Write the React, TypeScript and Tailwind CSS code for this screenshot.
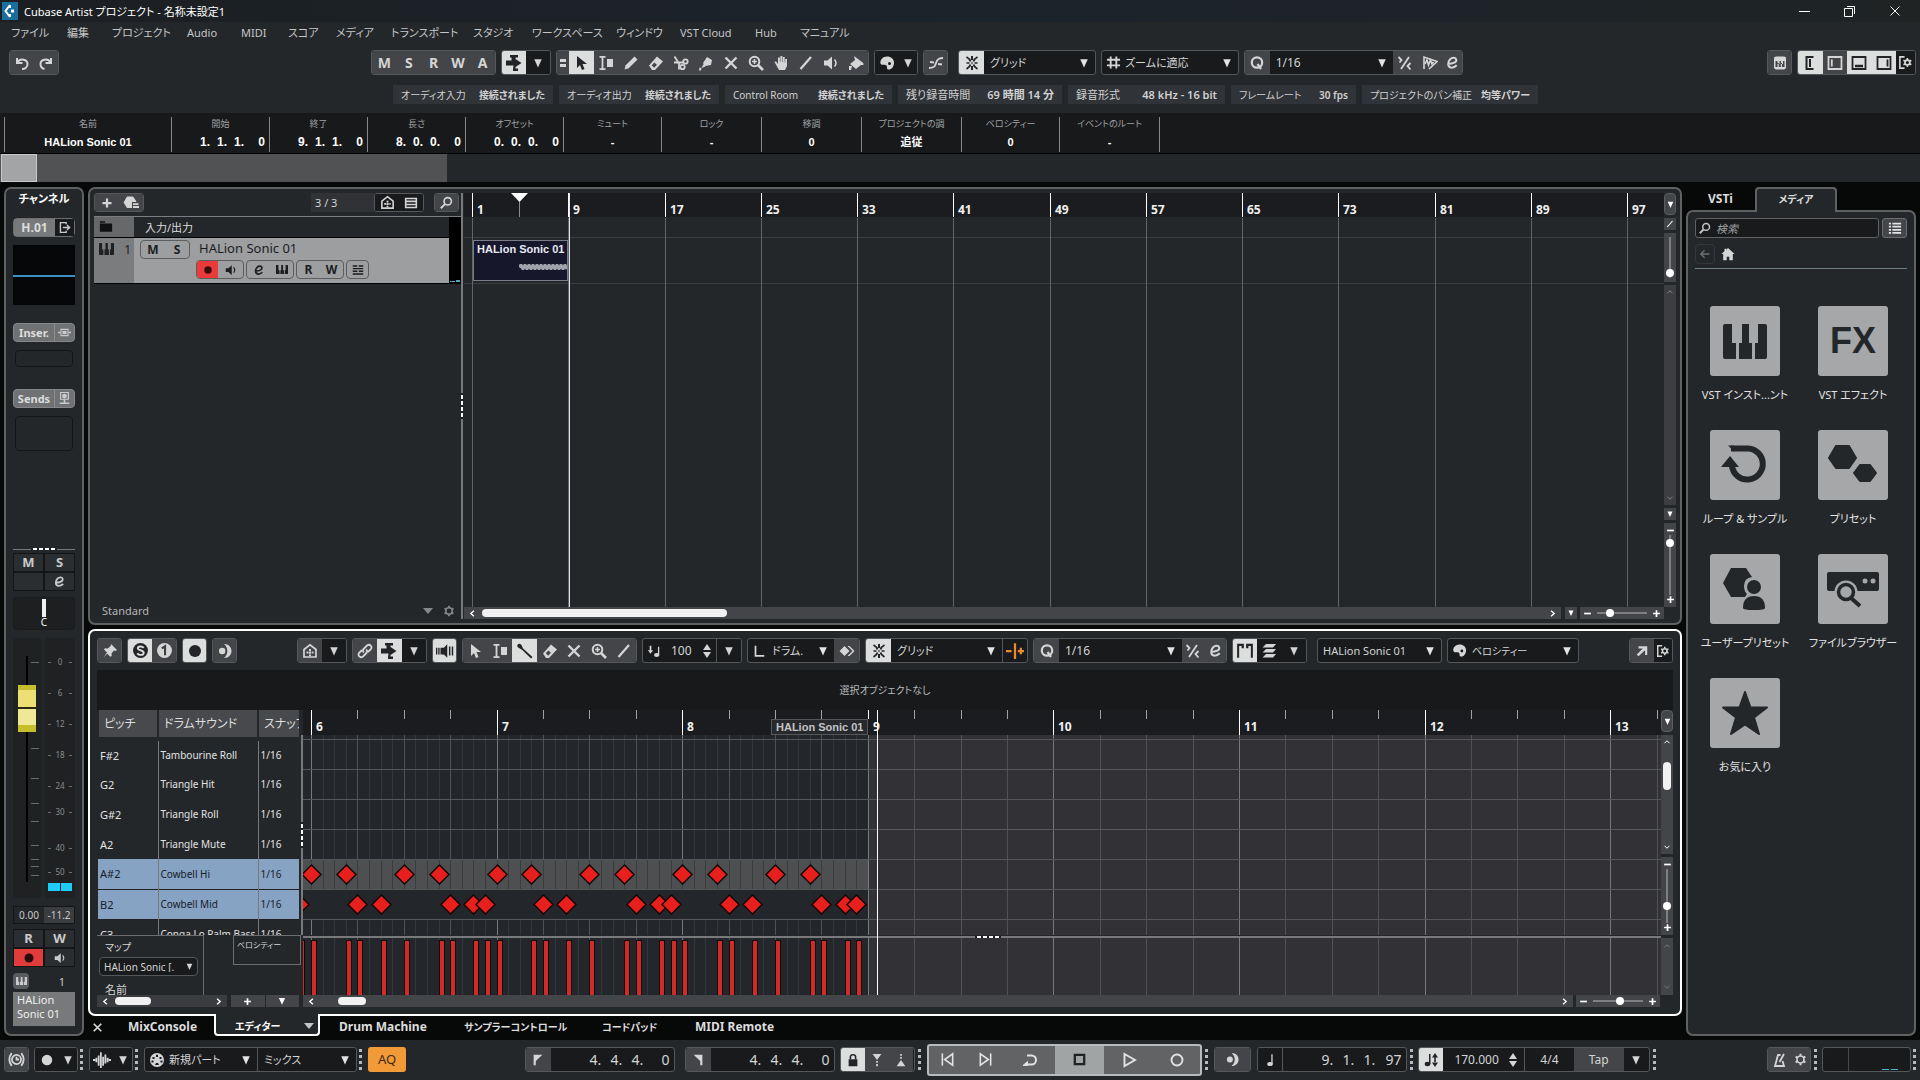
import React from "react";

type Kids = { children?: React.ReactNode };

const line = { fill: "none", stroke: "currentColor", strokeWidth: 2 } as const;

const ICONS: Record<string, React.ReactNode> = {
  undo: <g {...line}><path d="M3 3v5h5.500" /><path d="M3.500 7.500C6 3 13.500 4 13.500 9c0 3-2.500 5-5.500 5" /></g>,
  redo: <g {...line}><path d="M13 3v5H7.500" /><path d="M12.500 7.500C10 3 2.500 4 2.500 9c0 3 2 4.500 4 5" /></g>,
  autoscroll: <path d="M0 5.500h5.500V2.500H4V0h8v2.500h-2.500V4L15.500 8l-6 4v1.500H12V16H7v-2l.500-3.500H0z" />,
  arrow: <path d="M4 1v12l3-3 2 5 2.500-1-2-5H14z" />,
  range: <path d="M1.500 1h6v1.700H5.400v10.600h2.100V15h-6v-1.700h2.100V2.700H1.500zM9 4h6v8H9z" />,
  pencil: <path d="M1.500 14.500l1.200-4.200L11.500 1.500l3 3-8.800 8.800z" />,
  eraser: <path fillRule="evenodd" d="M1 10.500l8-9 6 5-8 8.500H4zM3.700 10.300l2.500 2.400 2.700-3-2.500-2.300z" />,
  cut: <g fill="none" stroke="currentColor" strokeWidth="1.800"><path d="M1.500 1.500l4.500 7v6M1 7.500h9" /><circle cx="12.500" cy="6.500" r="2.200" /><circle cx="9.500" cy="12" r="2.200" /></g>,
  glue: <path d="M9 2l5 3-1 5-6 1-2-3zM5.500 9l2 2.500-4 1.500zM1.500 12.500l2 .5-.5 2.500H1z" />,
  x: <path {...line} strokeWidth="2.400" d="M2.500 2.500l11 11M13.500 2.500l-11 11" />,
  zoom: <g {...line}><circle cx="6.500" cy="6.500" r="4.800" /><path d="M4 6.500h5M6.500 4v5" strokeWidth="1.600" /><path d="M10 10l5 5" strokeWidth="2.600" /></g>,
  hand: <path d="M1.500 7l1.500-.7L5 9V2.500h1.900V7h.5V1h1.900v6h.5V2h1.900v5.500h.5V4H14v7l-2 4H6z" />,
  slash: <path {...line} strokeWidth="2.200" d="M2.500 14L13 2" />,
  speaker: <g><path d="M1 5.500h3.500L9 1.500v13L4.500 10.500H1z" /><path d="M11.500 4.500q3 3.500 0 7" fill="none" stroke="currentColor" strokeWidth="1.500" /></g>,
  bucket: <path d="M6 1l8 6q2 1 1.500 3H13l-5 4-6-5 5-4zM1 11h3l-1 4H1z" />,
  palette: <path fillRule="evenodd" d="M8 1.500c4 0 7 2.500 7 6.200C15 12 12 15 9 14.500c-1.500-.3-.5-3-1.500-4S2.500 11 1.500 8.500C.5 5 4 1.500 8 1.500zM10.500 7a1.500 1.500 0 100 3 1.500 1.500 0 000-3z" />,
  curve: <g fill="none" stroke="currentColor" strokeWidth="1.800"><path d="M1 13c7 0 6-3 7-5s1-5 7-5" /><path d="M2 7l4 .5M10 9l4 .5" /></g>,
  snap: <g><path {...line} strokeWidth="1.800" d="M2.500 2Q6 4 6.500 6.500M13.500 2Q10 4 9.500 6.500M2.500 14Q6 12 6.500 9.500M13.500 14Q10 12 9.500 9.500" /><path d="M7 1h2v4H7zM7 11h2v4H7zM2.500 7.200h3v1.600h-3zM10.500 7.200h3v1.600h-3zM7.300 7.300h1.400v1.400H7.300z" /></g>,
  hash: <path {...line} d="M5 1.500v13M11 1.500v13M1 5h14M1 11h14" />,
  q: <g {...line} strokeWidth="2.200"><circle cx="8" cy="7.500" r="5.200" /><path d="M8.500 9l3.500 5" /></g>,
  e: <path {...line} strokeWidth="2.200" d="M3 9.500C9 9.500 12.500 7.500 12 5c-.5-2.500-4-3-6.500-.5C2.500 7.500 2.500 13 7 13.500c2.500 0 4-1 5.500-2.500" />,
  iq: <g fill="none" stroke="currentColor" strokeWidth="1.800"><path d="M4 14L12 2M1.500 2l3 3-2 2.500M13.500 8l-3 3 3 3.500" /></g>,
  aq: <g fill="none" stroke="currentColor" strokeWidth="1.600"><path d="M2 14V2l13 4.500L7 14" /><path d="M3 9l2-4 1.500 5 2-5 1.500 4 1.500-2" /></g>,
  keyboard: <path fillRule="evenodd" d="M2 3q0-1.500 2-1.500h8q2 0 2 1.500v9q0 2.500-2.500 2.500h-7Q2 14.500 2 12zM3.500 6v6h2V8h1.300v4h2V8H10v4h2.500V6H11v3H9V6H7.500v3h-2V6z" />,
  zleft: <path {...line} d="M11.500 2H4.500v12h7M8 4v8" />,
  zpart: <g {...line} strokeWidth="1.800"><path d="M1.500 2h13v12h-13z" /><path d="M4.800 4.500v7" /></g>,
  zlow: <g {...line} strokeWidth="1.800"><path d="M1.500 2h13v12h-13z" /><path d="M4 11h8" strokeWidth="2.600" /></g>,
  zright: <g {...line} strokeWidth="1.800"><path d="M1.500 2h13v12h-13z" /><path d="M11.500 4.500v7" /></g>,
  setup: <g fill="none" stroke="currentColor"><path strokeWidth="1.700" d="M7 2H2v12h5" /><circle cx="10" cy="8" r="2.600" strokeWidth="1.800" /><path strokeWidth="1.800" d="M10 3.200v2M10 10.800v2M5.800 5.600l1.800 1M12.400 9.400l1.800 1M5.800 10.400l1.800-1M12.400 6.600l1.800-1" /></g>,
  gear: <g fill="none" stroke="currentColor"><circle cx="8" cy="8" r="4.300" strokeWidth="2" /><path strokeWidth="2.400" d="M8 1v2.500M8 12.500V15M2 4.500l2.200 1.300M11.800 10.200L14 11.500M2 11.500l2.200-1.300M11.800 5.800L14 4.500" /></g>,
  plus: <path {...line} strokeWidth="3" d="M8 2v12M2 8h12" />,
  minus: <path {...line} strokeWidth="3" d="M2 8h12" />,
  preset: <path d="M4 1.500h6l3.500 5-.5.5H9v6H4L.500 7.500zM10 8.200h5.500v1.800H10zM10 11h6v2h-6z" />,
  house: <g fill="none" stroke="currentColor" strokeWidth="1.700"><path d="M2 6.500L8 1.800l6 4.700V14H2z" /><path d="M4.500 9.500h7M8 6v7" strokeWidth="2" strokeDasharray="2 .8" /></g>,
  list: <path fillRule="evenodd" d="M1 2h14v12H1zM2.800 3.600v1.600h10.400V3.600zM2.800 7v1.800h10.400V7zM2.800 10.600v1.800h10.400v-1.800z" />,
  search: <g {...line}><circle cx="9.500" cy="6.500" r="4.500" /><path d="M6 10l-5 5" strokeWidth="2.400" /></g>,
  folder: <path d="M1 1.500h6V3H1zM1 4h14v9.500H1z" />,
  lanes: <path d="M1 1.500h6v2.200H1zM9 1.500h6v2.200H9zM1 5.300h14v1.700H1zM1 8.600h6v2.200H1zM9 8.600h6v2.200H9zM1 12.400h14v2H1z" />,
  exit: <g fill="none" stroke="currentColor" strokeWidth="1.700"><path d="M10 4V2H3v12h7v-2M6 8h8M11 5l3.300 3L11 11" /></g>,
  insert: <g><path d="M0 7h3v2H0zM13 7h3v2h-3z" /><path fillRule="evenodd" d="M3 3.500h10v9H3zM4.300 4.800v6.400h7.400V4.800z" /><path d="M5.500 6h5v4h-5z" /></g>,
  send: <g><path fillRule="evenodd" d="M2.500 0h11v9.500h-11zM4 1.200v7h8v-7z" /><circle cx="8" cy="5" r="3" /><path d="M7 9h2v4H7zM2 13h12v1.800H2z" /></g>,
  pin: <path d="M9 1l6 6-1.500 1-1.500-.5-2.500 3 .2 2.500-1.500.7-3-3L1.500 14.500 5 9.500l-3-3 1-1.300 2.800.2 3-2.700z" />,
  solo: <g><circle cx="8" cy="8" r="7" /><path d="M11 5.500C9.500 3.500 5.500 4 5.500 6s5.500 1.500 5.500 4-4.500 3-6 .5" fill="none" stroke="#dcdddd" strokeWidth="1.800" /></g>,
  one: <g><circle cx="8" cy="8" r="7" /><path d="M5.500 6l3-2v8.500" fill="none" stroke="#3c3e41" strokeWidth="2" /></g>,
  dot: <circle cx="8" cy="8" r="6" />,
  moon: <g><path d="M7 1C17 1 17 15 7 15C11.500 11 11.500 5 7 1z" /><circle cx="5.200" cy="8" r="3.200" /></g>,
  link: <g {...line} strokeWidth="1.800"><path d="M7 9.500C5 8 6 6.500 7 5.500l3-3c3-2 5.500 1 4 3.500L11 9" /><path d="M9 6.500c2 1.500 1 3 0 4l-3 3c-3 2-5.500-1-4-3.500L5 7" /></g>,
  feedback: <path d="M0 5h1.200v6H0zM2 5h1.200v6H2zM4 5h3l3-3v12l-3-3H4zM11.500 4h1.300v8h-1.300zM14 4h1.300v8H14z" />,
  stick: <path d="M.5 2Q2-.5 4.500 2L6 5.500l9.500 8.500-1.500 1.500L5 6.800 2 5Q-.5 4 .5 2z" />,
  vel: <g><path d="M3 2h2v5h2L4 11 1 7h2zM12.500 3h1.500v10h-1.500z" /><ellipse cx="11" cy="12.500" rx="3" ry="2.300" /></g>,
  lshape: <path {...line} d="M4 2v11.500h10" />,
  diamonds: <path d="M5.500 3l5 5-5 5-5-5zM8.500 3h2l5 5-5 5h-2l5-5z" />,
  plusminus: <path {...line} d="M0 8h5M8 1v14M10.500 8H16M13.200 5.200v5.600" />,
  parts: <path d="M1 1.500h6v4H5v-2H2.800V14H1zM9 1.500h6V14h-1.800V3.500H11v2H9z" />,
  layers: <path d="M5 1h10l-3 3.500H1.500zM5 6h10l-3 3.500H1.500zM5 11h10l-3 3.500H1.500z" />,
  open: <path d="M4 2.500h10v10h-2.500V7L4 14 2 12l7-7H4z" />,
  blist: <path d="M1 2h2.500v2H1zM5 2h10v2H5zM1 5.500h2.500v2H1zM5 5.500h10v2H5zM1 9h2.500v2H1zM5 9h10v2H5zM1 12.500h2.500v2H1zM5 12.500h10v2H5z" />,
  back: <path {...line} d="M14 8H3M7.500 3L2.500 8l5 5" />,
  home: <path d="M8 1l7.500 7h-2v7H9.500v-4h-3v4H2.500V8h-2L4 4.500V2h2v1z" />,
  clock: <g fill="none" stroke="currentColor" strokeWidth="1.700"><circle cx="8" cy="8" r="4.300" /><path d="M8 5.500V8h2.500M3.500 2Q-1 8 3.500 14M12.500 2Q17 8 12.500 14" /></g>,
  wave: <path {...line} strokeWidth="1.600" d="M0 8h2M3 6v4M5 4v9M7 1v14M9 5v8M11 3v8M13 6v4M14 8h2" />,
  midi: <path fillRule="evenodd" d="M8 1a7 7 0 100 14A7 7 0 008 1zM7 2.800h2V5H7zM3.500 5h2v2h-2zM10.500 5h2v2h-2zM2.500 8.500h2v2h-2zM11.500 8.500h2v2h-2zM6 13l1-2h2l1 2z" />,
  locl: <path d="M3 2h10L5.500 9v5H3z" />,
  locr: <path d="M3 2h10v12h-2.500V9z" />,
  lock: <g><path d="M3 7h10v8H3z" /><path d="M5 7V4.500Q5 2 8 2t3 2.500V7" fill="none" stroke="currentColor" strokeWidth="1.800" /></g>,
  punchin: <path d="M3 1h10L8 8zM7 9h2v2H7zM7 12.500h2v2.500H7z" />,
  punchout: <path d="M3 15h10L8 8zM7 1h2v2H7zM7 4.500h2v2H7z" />,
  prev: <g {...line} strokeWidth="1.700"><path d="M2.500 1.500v13" /><path d="M13.500 2v12L5 8z" /></g>,
  next: <g {...line} strokeWidth="1.700"><path d="M13.500 1.500v13" /><path d="M2.500 2v12L11 8z" /></g>,
  cycle: <g {...line}><path d="M5 3.500h4.500a4.500 4.500 0 010 9H3" /><path d="M1 13.500l4.500-4v4z" fill="currentColor" strokeWidth="1" /></g>,
  stop: <path {...line} strokeWidth="2.400" d="M3 3h10v10H3z" />,
  play: <path {...line} strokeWidth="1.900" d="M3.500 2l10.500 6-10.500 6z" />,
  rec: <circle {...line} strokeWidth="1.900" cx="8" cy="8" r="5.500" />,
  note: <g><path d="M9.500 1.500H11v11H9.500z" /><ellipse cx="8" cy="12.500" rx="3.200" ry="2.300" /></g>,
  tempo: <g><path d="M6 2h1.500v10H6zM11.200 5h1.600v6h-1.600zM12 1l3 4.500H9zM12 15l3-4.500H9z" /><ellipse cx="4.500" cy="12" rx="2.800" ry="2.200" /></g>,
  metro: <g {...line} strokeWidth="1.800"><path d="M10.500 9l1.500 5H3L6 3h2.500M7.500 10L12 2" /></g>,
  close: <path {...line} strokeWidth="1.300" d="M2 2l12 12M14 2L2 14" />,
  left: <path {...line} strokeWidth="2.400" d="M10.500 3L5 8l5.500 5" />,
  right: <path {...line} strokeWidth="2.400" d="M5.500 3L11 8l-5.500 5" />,
  up: <path {...line} d="M3 10.500L8 5.500l5 5" />,
  down: <path {...line} d="M3 5.500l5 5 5-5" />,
  tri: <path d="M3 3h10L8 14z" />,
};

function Icon({ n, c = "size-4" }: { n: string; c?: string }) {
  return <svg viewBox="0 0 16 16" fill="currentColor" aria-hidden="true" className={"shrink-0 " + c}>{ICONS[n]}</svg>;
}

function Piano({ c }: { c: string }) {
  return (
    <svg viewBox="0 0 44 35" fill="currentColor" aria-hidden="true" className={"shrink-0 " + c}>
      <path d="M2 0h7v19h4v16H2q-2 0-2-2V2q0-2 2-2zM19 0h7v19h3v16H16V19h3zM35 0h7q2 0 2 2v31q0 2-2 2H32V19h3z" />
    </svg>
  );
}

const TONE = {
  gray: "bg-[#434548] text-[#d4d5d5]",
  on: "bg-[#dcdddd] text-[#222427]",
  dark: "bg-[#191a1c] text-[#d4d5d5]",
  clear: "",
};

function Cell({ label, icon, tone = "gray", w = "w-[25px]", ic, children }: { label: string; icon?: string; tone?: keyof typeof TONE; w?: string; ic?: string } & Kids) {
  return (
    <button type="button" aria-label={label} className={"flex min-w-0 items-center justify-center leading-none " + w + " " + TONE[tone]}>
      {icon ? <Icon n={icon} c={ic} /> : children}
    </button>
  );
}

function Group({ w = "", h = "h-[25px]", children }: { w?: string; h?: string } & Kids) {
  return <div className={"flex shrink-0 overflow-hidden rounded-[3px] border border-[#55585a] bg-[#191a1c] " + h + " " + w}>{children}</div>;
}

function Drop({ label, value, w = "flex-1", pad = "pl-2", size = "text-[12px]" }: { label: string; value: string; w?: string; pad?: string; size?: string }) {
  return (
    <div className={"relative flex min-w-0 items-center " + w}>
      <select aria-label={label} className={"h-full w-full appearance-none bg-transparent pr-4 leading-none text-[#d4d5d5] outline-none " + pad + " " + size}>
        <option>{value}</option>
      </select>
      <Icon n="tri" c="pointer-events-none absolute right-[5px] size-3 text-[#e2e3e3]" />
    </div>
  );
}

function Dots() {
  return (
    <div aria-hidden="true" className="flex w-[3px] shrink-0 flex-col gap-[3px]">
      <i className="h-[3px] bg-[#b9babb]" /><i className="h-[3px] bg-[#b9babb]" /><i className="h-[3px] bg-[#b9babb]" /><i className="h-[3px] bg-[#b9babb]" />
    </div>
  );
}

function Grip({ vertical }: { vertical?: boolean }) {
  return (
    <div aria-hidden="true" className={"flex shrink-0 gap-[2px] bg-[#1d1f22] " + (vertical ? "w-[2px] flex-col py-[2px]" : "h-[2px] px-[2px]")}>
      {[0, 1, 2, 3].map((i) => <i key={i} className={"bg-white " + (vertical ? "h-1 w-full" : "h-full w-1")} />)}
    </div>
  );
}

const MENU: [string, string][] = [
  ["ファイル", "w-[56px]"], ["編集", "w-[45px]"], ["プロジェクト", "w-[75px]"], ["Audio", "w-[54px]"], ["MIDI", "w-[47px]"],
  ["スコア", "w-[48px]"], ["メディア", "w-[55px]"], ["トランスポート", "w-[82px]"], ["スタジオ", "w-[59px]"], ["ワークスペース", "w-[84px]"],
  ["ウィンドウ", "w-[64px]"], ["VST Cloud", "w-[75px]"], ["Hub", "w-[45px]"], ["マニュアル", "w-[60px]"],
];

function TitleBar() {
  return (
    <header>
      <div className="flex h-[22px] items-center bg-gradient-to-r from-[#1c1f22] via-[#1b232b] to-[#1f2324] pl-[2px]">
        <svg viewBox="0 0 16 18" aria-hidden="true" className="h-[18px] w-4"><path fill="#1a6e9d" d="M0 0h16v18H0z" /><path d="M8 3L3.500 9 8 15M8 3v3M8 12v3" fill="none" stroke="#fff" strokeWidth="2" /><path d="M9 7.500h3v3H9z" fill="#fff" /></svg>
        <h1 className="ml-[6px] flex-1 whitespace-nowrap pt-px text-[11px] leading-none text-white">Cubase Artist プロジェクト - 名称未設定1</h1>
        <div className="flex items-center gap-[34px] pr-[19px] text-white">
          <button type="button" aria-label="最小化"><svg viewBox="0 0 11 11" className="size-[11px]"><path d="M0 5.500h11" stroke="currentColor" /></svg></button>
          <button type="button" aria-label="元に戻す"><svg viewBox="0 0 11 11" className="size-[11px]" fill="none" stroke="currentColor"><path d="M.5 2.500h8v8h-8zM3 .5h7.500V8" /></svg></button>
          <button type="button" aria-label="閉じる"><Icon n="close" c="size-3" /></button>
        </div>
      </div>
      <nav className="flex h-[23px] items-center pb-[2px] pl-[11px] text-[11px] leading-none text-[#c3c5c6]">
        {MENU.map(([t, w]) => <button type="button" key={t} className={"whitespace-nowrap text-left " + w}>{t}</button>)}
      </nav>
    </header>
  );
}

const TOOLS: [string, string][] = [["選択", "arrow"], ["範囲選択", "range"], ["鉛筆", "pencil"], ["消しゴム", "eraser"], ["はさみ", "cut"], ["のり", "glue"], ["ミュート", "x"], ["ズーム", "zoom"], ["手", "hand"], ["ライン", "slash"], ["再生", "speaker"], ["カラー", "bucket"]];

function Toolbar() {
  return (
    <div className="mt-[5px] flex gap-[5px] pl-[9px] pr-1">
      <Group w="w-[50px]"><Cell label="元に戻す操作" icon="undo" /><Cell label="やり直し" icon="redo" /></Group>
      <div className="flex-1" />
      <div className="ml-[3px]" />
      <Group w="w-[125px]">
        {["M", "S", "R", "W", "A"].map((t) => <Cell key={t} label={t}><b className="text-[14px]">{t}</b></Cell>)}
      </Group>
      <Group w="w-[50px]"><Cell label="オートスクロール" icon="autoscroll" tone="on" /><Cell label="スクロール設定" icon="tri" tone="dark" ic="size-3" /></Group>
      <Group w="w-[313px]">
        <div className="flex w-[12px] shrink-0 flex-col items-center justify-center gap-[2px] bg-[#434548]"><i className="h-[3px] w-[6px] bg-[#d4d5d5]" /><i className="h-[3px] w-[6px] bg-[#d4d5d5]" /></div>
        {TOOLS.map(([l, i]) => <Cell key={l} label={l} icon={i} tone={i === "arrow" ? "on" : "gray"} />)}
      </Group>
      <Group w="w-[44px]"><Cell label="カラーツール" icon="palette" tone="dark" /><Cell label="カラーメニュー" icon="tri" tone="dark" ic="size-3" w="w-[18px]" /></Group>
      <Group w="w-[25px]"><Cell label="オートメーション" icon="curve" /></Group>
      <div className="ml-[5px]">
        <Group w="w-[138px]"><Cell label="スナップ" icon="snap" tone="on" w="w-[25px] shrink-0" /><Drop label="スナップタイプ" value="グリッド" pad="pl-[6px]" size="text-[11px]" /></Group>
      </div>
      <Group w="w-[138px]"><span className="flex items-center pl-1 text-[#d4d5d5]"><Icon n="hash" c="size-[15px]" /></span><Drop label="グリッドタイプ" value="ズームに適応" pad="pl-1" size="text-[11px]" /></Group>
      <Group w="w-[219px]">
        <Cell label="クオンタイズ適用" icon="q" /><Drop label="クオンタイズ" value="1/16" w="w-[125px]" pad="pl-[6px]" />
        <Cell label="iQ" icon="iq" /><Cell label="オーディオクオンタイズ" icon="aq" /><Cell label="クオンタイズ設定" icon="e" w="w-[20px]" ic="size-[15px]" />
      </Group>
      <div className="flex-1" />
      <Group w="w-[25px]"><Cell label="キーボード" icon="keyboard" /></Group>
      <Group w="w-[119px]">
        <Cell label="左ゾーン" icon="zleft" tone="on" /><Cell label="インスペクター" icon="zpart" /><Cell label="下ゾーン" icon="zlow" tone="on" /><Cell label="右ゾーン" icon="zright" tone="on" /><Cell label="レイアウト設定" icon="setup" tone="dark" w="w-[19px]" ic="size-[15px]" />
      </Group>
    </div>
  );
}

const STATUS: [string, string, string][] = [
  ["オーディオ入力", "接続されました", "w-[160px] text-[10px]"], ["オーディオ出力", "接続されました", "w-[160px] text-[10px]"], ["Control Room", "接続されました", "w-[167px] text-[10px]"],
  ["残り録音時間", "69 時間 14 分", "w-[164px] text-[11px]"], ["録音形式", "48 kHz - 16 bit", "w-[157px] text-[11px]"], ["フレームレート", "30 fps", "w-[125px] text-[10px]"], ["プロジェクトのパン補正", "均等パワー", "w-[176px] text-[10px]"],
];

function StatusLine() {
  return (
    <dl className="mt-[10px] flex justify-center gap-[6px] pl-[11px] leading-none">
      {STATUS.map(([k, v, w]) => (
        <div key={k} className={"flex h-[19px] items-center justify-between whitespace-nowrap bg-[#303337] px-[8px] text-[#d0d1d2] " + w}><dt>{k}</dt><dd className="font-semibold">{v}</dd></div>
      ))}
    </dl>
  );
}

function Pos({ v, cell, last }: { v: string[]; cell: string; last: string }) {
  return <span className="inline-flex">{v.map((t, i) => <span key={i} className={i === 3 ? "text-right " + last : "text-left " + cell}>{t}{i < 3 ? "." : ""}</span>)}</span>;
}

const INFO: [string, string | string[], string][] = [
  ["名前", "HALion Sonic 01", "w-[167px]"], ["開始", ["1", "1", "1", "0"], "w-[98px]"], ["終了", ["9", "1", "1", "0"], "w-[98px]"], ["長さ", ["8", "0", "0", "0"], "w-[98px]"],
  ["オフセット", ["0", "0", "0", "0"], "w-[98px]"], ["ミュート", "-", "w-[98px]"], ["ロック", "-", "w-[100px]"], ["移調", "0", "w-[100px]"], ["プロジェクトの調", "追従", "w-[100px]"], ["ベロシティー", "0", "w-[98px]"], ["イベントのルート", "-", "w-[100px]"],
];

function InfoLine() {
  return (
    <dl className="mt-[9px] flex h-[41px] border-b border-black bg-[#18191b] pb-px pl-1 pt-1">
      {INFO.map(([k, v, w]) => (
        <div key={k} className={"flex flex-col border-l border-[#85878a] " + w}>
          <dt className="mt-px text-center text-[9px] leading-[12px] text-[#a0a2a4]">{k}</dt>
          <dd className={"mt-[5px] whitespace-nowrap font-['Liberation_Sans','Noto_Sans_CJK_JP',sans-serif] font-bold leading-[14px] text-white " + (Array.isArray(v) ? "pr-1 text-right text-[12px]" : "text-center text-[11px]")}>
            {Array.isArray(v) ? <Pos v={v} cell="w-[17px]" last="w-[14px]" /> : v}
          </dd>
        </div>
      ))}
      <div className="border-l border-[#85878a]" />
    </dl>
  );
}

const MS_CELL = "flex items-center justify-center border border-[#141517] leading-none";

function ChannelStrip() {
  const ticks = [20, 106, 136, 161, 179, 203, 217, 224, 233];
  const scale: [string, number][] = [["0", 24], ["6", 55], ["12", 86], ["18", 117], ["24", 148], ["30", 174], ["40", 210], ["50", 234]];
  return (
    <aside className="ml-1 flex w-[80px] shrink-0 flex-col rounded-[7px] border-2 border-[#5f6163] bg-[#24272a] px-[7px] text-[#c9cacb]">
      <h2 className="mt-[3px] text-center text-[11px] font-bold leading-[14px] text-white">チャンネル</h2>
      <div className="mt-[12px] flex h-[19px] rounded-sm border border-[#6c6e70]">
        <button type="button" className="w-[41px] bg-[#77797b] text-[12px] font-bold leading-none text-[#dcdddd]">H.01</button>
        <button type="button" aria-label="ルーティング" className="flex flex-1 items-center justify-center bg-[#191a1c]"><Icon n="exit" c="size-[13px]" /></button>
      </div>
      <div className="mt-2 flex h-[60px] items-center bg-[#060708]"><div className="mt-px h-[2px] w-full bg-[#3b8fc4]" /></div>
      <div className="mt-[18px] flex h-[19px] rounded-sm border border-[#85878a] bg-[#6f7173]">
        <button type="button" className="w-[41px] border-r border-[#8b8d8f] text-[11px] font-bold leading-none text-[#dcdddd]">Inser.</button>
        <button type="button" aria-label="インサートバイパス" className="flex flex-1 items-center justify-center"><Icon n="insert" c="size-[13px]" /></button>
      </div>
      <div className="mx-[2px] mt-[8px] h-[17px] rounded-sm border border-[#141517]" />
      <div className="mt-[22px] flex h-[19px] rounded-sm border border-[#85878a] bg-[#6f7173]">
        <button type="button" className="w-[41px] border-r border-[#8b8d8f] text-[11px] font-bold leading-none text-[#dcdddd]">Sends</button>
        <button type="button" aria-label="センドバイパス" className="flex flex-1 items-center justify-center"><Icon n="send" c="size-[13px]" /></button>
      </div>
      <div className="mx-[2px] mt-[8px] h-[35px] rounded-sm border border-[#141517]" />
      <div className="min-h-[40px] flex-1" />
      <div className="flex items-center"><div className="h-px flex-1 bg-[#77797b]" /><Grip /><div className="h-px flex-1 bg-[#77797b]" /></div>
      <div className="mt-[3px] grid h-[38px] grid-cols-2 grid-rows-2 bg-[#2b2e31]">
        <button type="button" className={MS_CELL}><b className="text-[13px]">M</b></button>
        <button type="button" className={MS_CELL}><b className="text-[13px]">S</b></button>
        <span className={MS_CELL} />
        <button type="button" aria-label="チャンネル編集" className={MS_CELL}><Icon n="e" c="size-[13px]" /></button>
      </div>
      <div className="mt-[6px] flex h-[33px] flex-col items-center rounded-sm border border-[#1a1b1d] bg-[#1e1f21] pt-px">
        <div className="h-[18px] w-1 bg-[#f0f0f0]" /><span className="text-[10px] leading-[11px] text-white">C</span>
      </div>
      <div className="mt-[8px] flex h-[260px] gap-1">
        <div className="relative flex w-[28px] justify-center rounded-sm bg-[#1f2123] pt-[18px]">
          {ticks.map((t) => <i key={t} className="absolute right-[2px] h-px w-2 bg-[#6b6d6f]" style={{ top: t + 4 }} />)}
          <input type="range" aria-label="音量" defaultValue={84} className="relative h-[226px] w-[2px] appearance-none overflow-visible bg-black [direction:rtl] [writing-mode:vertical-lr] [&::-webkit-slider-thumb]:h-[47px] [&::-webkit-slider-thumb]:w-[18px] [&::-webkit-slider-thumb]:appearance-none [&::-webkit-slider-thumb]:bg-[linear-gradient(#c6bf2d_0_5px,#ecdf73_5px_22px,#2b2a10_22px_24px,#efe896_24px_40px,#c6bf2d_40px)]" />
        </div>
        <div className="relative flex-1 rounded-sm bg-[#1f2123] text-[8px] text-[#8b8d8f]">
          {scale.map(([t, y]) => <div key={t} className="absolute inset-x-[3px] flex items-center justify-between leading-none" style={{ top: y - 4 }}><i className="h-px w-[3px] bg-[#6b6d6f]" />{t}<i className="h-px w-[3px] bg-[#6b6d6f]" /></div>)}
          <div className="absolute inset-x-[3px] top-[245px] flex h-2 gap-px"><i className="flex-1 bg-[#1ecbfa]" /><i className="flex-1 bg-[#1ecbfa]" /></div>
        </div>
      </div>
      <div className="mt-[8px] flex h-[18px] items-center border border-[#141517] text-[10px] leading-none"><span className="flex-1 text-center">0.00</span><span className="flex h-full flex-1 items-center justify-center bg-[#3a3c3f]">-11.2</span></div>
      <div className="mt-[5px] grid h-[38px] grid-cols-2 grid-rows-2 bg-[#2b2e31]">
        <button type="button" className={MS_CELL}><b className="text-[13px]">R</b></button>
        <button type="button" className={MS_CELL}><b className="text-[13px]">W</b></button>
        <button type="button" aria-label="録音可能" className={MS_CELL + " bg-[#e13c3c] text-[#2a0b0b]"}><Icon n="dot" c="size-3" /></button>
        <button type="button" aria-label="モニタリング" className={MS_CELL}><Icon n="speaker" c="size-3" /></button>
      </div>
      <div className="mt-[6px] flex h-4 items-center justify-between pr-[10px]"><span className="flex h-4 w-4 items-center justify-center rounded-sm bg-[#595b5e]"><Piano c="w-[11px]" /></span><span className="text-[11px] leading-none">1</span></div>
      <div className="mb-[8px] mt-[3px] h-[34px] bg-[#77797b] pl-1 pt-px text-[11px] leading-[14px] text-[#f0f0f0]">HALion<br />Sonic 01</div>
    </aside>
  );
}

const GB = "flex h-[19px] overflow-hidden rounded-sm border border-[#5b5d5f]";

function TrackList() {
  return (
    <section className="flex w-[367px] shrink-0 flex-col">
      <div className="flex h-[19px]">
        <Group w="w-[50px]" h="h-[19px]"><Cell label="トラックを追加" icon="plus" ic="size-3" /><Cell label="トラックプリセット" icon="preset" /></Group>
        <div className="flex-1" />
        <div className="flex w-[63px] items-center bg-[#303236] pl-1 text-[11px] leading-none text-[#d4d5d5]">3 / 3</div>
        <Group w="w-[50px]" h="h-[19px]"><Cell label="表示設定" icon="house" tone="dark" ic="size-[15px]" /><Cell label="区分" icon="list" tone="dark" ic="size-[14px]" /></Group>
        <div className="w-[10px]" />
        <Group w="w-[25px]" h="h-[19px]"><Cell label="トラックを検索" icon="search" ic="size-[13px]" /></Group>
        <div className="w-[2px]" />
      </div>
      <div className="mt-[4px] border-t border-[#7b7d80]" />
      <div className="flex">
        <div className="flex-1">
          <div className="flex h-[21px] border-b border-black">
            <span className="flex w-10 items-center bg-[#66686a] pl-[5px] text-[#0f1011]"><Icon n="folder" c="size-[14px]" /></span>
            <span className="flex items-center pl-[11px] text-[11px] leading-none text-[#dcdddd]">入力/出力</span>
          </div>
          <div className="flex h-[46px] border-b border-black">
            <div className="flex w-10 items-start justify-between bg-[#7a7c7e] pl-[5px] pr-[3px] pt-[5px] text-[#1f2123]"><Piano c="w-[15px]" /><span className="text-[12px] leading-[14px]">1</span></div>
            <div className="flex-1 bg-[#9d9ea0] pl-[6px] pt-[2px] text-[#1c1d1f]">
              <div className="flex items-center"><div className={GB + " w-[50px]"}><Cell label="ミュート" tone="clear"><b className="text-[12px]">M</b></Cell><Cell label="ソロ" tone="clear"><b className="text-[12px]">S</b></Cell></div><span className="ml-[9px] pb-[2px] text-[13px] leading-none">HALion Sonic 01</span></div>
              <div className="ml-[56px] mt-px flex gap-[2px]">
                <div className={GB + " w-[48px]"}><button type="button" aria-label="録音可能" className="flex flex-1 items-center justify-center bg-[#ea3a3a] text-[#3a0c0c]"><Icon n="dot" c="size-[10px]" /></button><Cell label="モニタリング" icon="speaker" tone="clear" ic="size-3" /></div>
                <div className={GB + " w-[48px]"}><Cell label="編集" icon="e" tone="clear" ic="size-3" /><Cell label="インストゥルメント" tone="clear"><Piano c="w-3" /></Cell></div>
                <div className={GB + " w-[48px]"}><Cell label="リード" tone="clear"><b className="text-[12px]">R</b></Cell><Cell label="ライト" tone="clear"><b className="text-[12px]">W</b></Cell></div>
                <div className={GB + " w-[23px]"}><Cell label="レーン表示" icon="lanes" tone="clear" ic="size-3" /></div>
              </div>
            </div>
          </div>
        </div>
        <div className="flex w-[12px] items-end gap-px bg-black px-px pb-[2px]"><i className="h-px flex-1 bg-[#51a3c4]" /><i className="h-[2px] flex-1 bg-[#51a3c4]" /></div>
      </div>
      <div className="flex-1" />
      <div className="flex items-center pl-[8px] text-[#85878a]"><span className="flex-1 text-[11px] leading-[16px] text-[#b4b6b8]">Standard</span><button type="button" aria-label="プリセットを選択"><svg viewBox="0 0 10 6" className="h-[6px] w-[10px]" fill="currentColor"><path d="M0 0h10L5 6z" /></svg></button><button type="button" aria-label="トラックコントロール設定" className="ml-[10px] mr-[6px]"><Icon n="gear" c="size-3" /></button></div>
    </section>
  );
}

function Splitter() {
  return <div className="flex w-[2px] shrink-0 flex-col"><div className="flex-1 bg-[#77797b]" /><Grip vertical /><div className="flex-1 bg-[#77797b]" /></div>;
}

const H_RANGE = "h-[2px] min-w-0 flex-1 appearance-none bg-[#7d7f82] [&::-webkit-slider-thumb]:size-2 [&::-webkit-slider-thumb]:appearance-none [&::-webkit-slider-thumb]:rounded-full [&::-webkit-slider-thumb]:bg-white";
const V_RANGE = "w-[2px] min-h-0 flex-1 appearance-none bg-[#7d7f82] [writing-mode:vertical-lr] [&::-webkit-slider-thumb]:size-2 [&::-webkit-slider-thumb]:appearance-none [&::-webkit-slider-thumb]:rounded-full [&::-webkit-slider-thumb]:bg-white";

function HZoom({ label, v }: { label: string; v: number }) {
  return (
    <div className="flex h-3 w-[84px] shrink-0 items-center bg-[#434548] px-[3px] text-white">
      <button type="button" aria-label={label + "を縮小"}><Icon n="minus" c="size-[9px]" /></button>
      <input type="range" aria-label={label} defaultValue={v} className={"mx-[5px] " + H_RANGE} />
      <button type="button" aria-label={label + "を拡大"}><Icon n="plus" c="size-[9px]" /></button>
    </div>
  );
}

function VZoom({ label, v, h }: { label: string; v: number; h: string }) {
  return (
    <div className={"flex w-3 flex-col items-center bg-[#434548] py-[3px] text-white " + h}>
      <button type="button" aria-label={label + "を縮小"} className="leading-none"><Icon n="minus" c="size-[9px]" /></button>
      <input type="range" aria-label={label} defaultValue={v} className={"my-1 " + V_RANGE} />
      <button type="button" aria-label={label + "を拡大"} className="leading-none"><Icon n="plus" c="size-[9px]" /></button>
    </div>
  );
}

function Arrange() {
  const bars = Array.from({ length: 13 }, (_, i) => ({ n: 1 + i * 8, x: 8 + Math.round(i * 96.25) }));
  return (
    <section className="ml-px flex min-w-0 flex-1 flex-col">
      <div className="flex min-h-[300px] flex-1">
        <div className="relative flex min-w-0 flex-1 flex-col overflow-hidden">
          <div className="h-6 bg-[#1b1c1f]" />
          <svg className="absolute left-0 top-0 h-full w-full" aria-hidden="true">
            <path d="M0 44.500h4000M0 90.500h4000" stroke="#3a3e40" />
            {bars.map((b) => <g key={b.n}><path d={`M${b.x + 0.5} 0v24`} stroke="#fff" /><path d={`M${b.x + 0.5} 25v2000`} stroke="#626567" /></g>)}
            <path d="M55.500 9v15" stroke="#8b8d8f" />
            <path d="M47 0h17L55.500 9z" fill="#fff" />
            <path d="M105.500 0v2000" stroke="#e2e4f0" />
          </svg>
          {bars.map((b) => <span key={b.n} className="absolute top-[11px] text-[12px] font-bold leading-[12px] text-[#f0f0f0]" style={{ left: b.x + 5 }}>{b.n}</span>)}
          <div className="absolute left-[9px] top-[47px] h-[41px] w-[95px] overflow-hidden border border-[#7b7c88] bg-[#16172b]">
            <p className="whitespace-nowrap pl-[3px] pt-px font-['Liberation_Sans'] text-[11px] font-bold leading-[14px] text-[#e8e8f4]">HALion Sonic 01</p>
            <svg className="ml-[45px] mt-[8px] h-[6px] w-[48px]" aria-hidden="true"><path d="M0 3L2 1l2 4 2-4 2 4 2-4 2 4 2-4 2 4 2-4 2 4 2-4 2 4 2-4 2 4 2-4 2 4 2-4 2 4 2-4 2 4 2-4 2 4 2-4 2 4" stroke="#a3a3ae" strokeWidth="3" fill="none" /></svg>
          </div>
        </div>
        <div className="flex w-3 flex-col gap-[3px] text-white">
          <button type="button" aria-label="ルーラー設定" className="flex h-[22px] items-center justify-center rounded-sm border border-[#5b5d5f] bg-[#434548]"><Icon n="tri" c="size-[9px]" /></button>
          <button type="button" aria-label="波形表示" className="flex h-3 items-center justify-center bg-[#434548]"><Icon n="slash" c="size-2" /></button>
          <div className="flex h-[49px] flex-col items-center bg-[#434548] py-[4px]"><input type="range" aria-label="波形ズーム" defaultValue={98} className={V_RANGE} /></div>
          <div className="flex flex-1 flex-col items-center justify-between bg-[#3c3e41] py-[3px] text-[#85878a]"><Icon n="up" c="size-2" /><Icon n="down" c="size-2" /></div>
          <button type="button" aria-label="トラック高さ" className="flex h-3 items-center justify-center bg-[#434548]"><Icon n="tri" c="size-2" /></button>
          <VZoom label="トラックズーム" v={8} h="h-[84px]" />
        </div>
      </div>
      <div className="flex h-3 text-white">
        <div className="flex flex-1 items-center bg-[#434548] pl-1"><Icon n="left" c="size-[9px]" /><div className="ml-[5px] h-2 w-[245px] rounded-sm bg-[#f1f1f1]" /><div className="flex-1" /><Icon n="right" c="size-[9px]" /><span className="w-1" /></div>
        <button type="button" aria-label="ズームプリセット" className="ml-1 flex w-3 items-center justify-center bg-[#434548]"><Icon n="tri" c="size-2" /></button>
        <div className="ml-[3px] mr-3"><HZoom label="横ズーム" v={22} /></div>
      </div>
    </section>
  );
}

function EditorToolbar() {
  return (
    <div className="flex gap-[5px]">
      <Group w="w-[25px]"><Cell label="固定" icon="pin" /></Group>
      <Group w="w-[50px]"><Cell label="エディターをソロ" icon="solo" tone="on" ic="size-[17px]" /><Cell label="ステップ" icon="one" ic="size-[17px]" /></Group>
      <Group w="w-[25px]"><Cell label="エディター内で録音" icon="dot" tone="on" ic="size-4" /></Group>
      <Group w="w-[25px]"><Cell label="レトロスペクティブ録音" icon="moon" /></Group>
      <div className="w-[50px]" />
      <Group w="w-[50px]"><Cell label="可視性" icon="house" /><Cell label="可視性設定" icon="tri" tone="dark" ic="size-3" /></Group>
      <Group w="w-[75px]"><Cell label="リンク" icon="link" /><Cell label="オートスクロール" icon="autoscroll" tone="on" /><Cell label="スクロール設定" icon="tri" tone="dark" ic="size-3" /></Group>
      <Group w="w-[25px]"><Cell label="フィードバック" icon="feedback" tone="on" ic="size-[18px]" /></Group>
      <Group w="w-[175px]">
        {[["選択", "arrow"], ["範囲", "range"], ["ドラムスティック", "stick"], ["消しゴム", "eraser"], ["ミュート", "x"], ["ズーム", "zoom"], ["ライン", "slash"]].map(([l, i]) => <Cell key={l} label={l} icon={i} tone={i === "stick" ? "on" : "gray"} />)}
      </Group>
      <Group w="w-[100px]">
        <label className="flex flex-1 items-center pl-1 text-[#d4d5d5]"><Icon n="vel" c="size-[14px]" /><input aria-label="挿入ベロシティー" defaultValue="100" className="ml-[10px] w-[32px] bg-transparent text-[12px] leading-none outline-none" /><Spin /></label>
        <Cell label="ベロシティー設定" icon="tri" tone="dark" ic="size-3" w="w-[25px] border-l border-[#55585a]" />
      </Group>
      <Group w="w-[113px]"><span className="flex items-center pl-1 text-[#d4d5d5]"><Icon n="lshape" c="size-[14px]" /></span><Drop label="音符の長さ" value="ドラム." pad="pl-[6px]" size="text-[11px]" /><Cell label="ドラム表示" icon="diamonds" w="w-[25px] shrink-0" /></Group>
      <Group w="w-[163px]"><Cell label="スナップ" icon="snap" tone="on" w="w-[25px] shrink-0" /><Drop label="スナップタイプ" value="グリッド" pad="pl-[6px]" size="text-[11px]" /><button type="button" aria-label="相対スナップ" className="flex w-[25px] items-center justify-center border-l border-[#55585a] text-[#e88b2b]"><Icon n="plusminus" c="size-[18px]" /></button></Group>
      <Group w="w-[194px]"><Cell label="クオンタイズ適用" icon="q" w="w-[25px] shrink-0" /><Drop label="クオンタイズ" value="1/16" pad="pl-[6px]" /><Cell label="iQ" icon="iq" w="w-[22px]" /><Cell label="クオンタイズ設定" icon="e" w="w-[22px]" ic="size-[15px]" /></Group>
      <Group w="w-[75px]"><Cell label="パート境界" icon="parts" tone="on" ic="size-[18px]" /><Cell label="レイヤー" icon="layers" tone="dark" /><Cell label="レイヤー設定" icon="tri" tone="dark" ic="size-3" /></Group>
      <div className="ml-[5px]"><Group w="w-[125px]"><Drop label="編集パート" value="HALion Sonic 01" pad="pl-[5px]" size="text-[11px]" /></Group></div>
      <Group w="w-[132px]"><span className="flex items-center pl-1 text-[#d4d5d5]"><Icon n="palette" c="size-[15px]" /></span><Drop label="カラー" value="ベロシティー" pad="pl-[5px]" size="text-[10px]" /></Group>
      <div className="flex-1" />
      <Group w="w-[44px]"><Cell label="別ウィンドウで開く" icon="open" ic="size-[14px]" /><Cell label="ツールバー設定" icon="setup" tone="dark" w="w-[19px]" ic="size-[14px]" /></Group>
    </div>
  );
}

function Spin() {
  return <svg viewBox="0 0 8 16" aria-hidden="true" className="h-4 w-2 shrink-0" fill="currentColor"><path d="M0 7h8L4 1zM0 9h8l-4 6z" /></svg>;
}

const SOUNDS = [["F#2", "Tambourine Roll"], ["G2", "Triangle Hit"], ["G#2", "Triangle Roll"], ["A2", "Triangle Mute"], ["A#2", "Cowbell Hi"], ["B2", "Cowbell Mid"], ["C3", "Conga Lo Palm Bass"]];
const HI = [0, 3, 8, 11, 16, 19, 24, 27, 32, 35, 40, 43];
const MID = [-1, 4, 6, 12, 14, 15, 20, 22, 28, 30, 31, 36, 38, 44, 46, 47];
const sx = (n: number) => Math.round(8 + n * 11.6);

function DrumList() {
  return (
    <div className="h-[225px] w-[202px] overflow-hidden">
      <table className="w-[202px] table-fixed border-collapse text-left leading-none">
        <thead>
          <tr className="h-[29px] text-[12px] text-[#dcdddd]">
            {[["ピッチ", "w-[60px]"], ["ドラムサウンド", "w-[100px]"], ["スナップ", "w-[42px]"]].map(([t, w]) => (
              <th key={t} className={"overflow-hidden whitespace-nowrap border-b-4 border-l-2 border-[#24272a] bg-[#48494c] pl-[5px] font-normal " + w}>{t}</th>
            ))}
          </tr>
        </thead>
        <tbody>
          {SOUNDS.map(([p, s]) => {
            const on = p === "A#2" || p === "B2";
            return (
              <tr key={p} className={"h-[30px] text-[11px] " + (on ? "border-b border-[#1f2123] bg-[#86a3c3] text-[#17202b]" : "text-[#e2e3e3]")}>
                <td className="pl-[2px]">{p}</td><td className="whitespace-nowrap border-l border-[#77797b] pl-[2px] text-[10px]">{s}</td><td className="border-l border-[#77797b] pl-[2px] text-[10px]">1/16</td>
              </tr>
            );
          })}
        </tbody>
      </table>
    </div>
  );
}

function GridLines({ h }: { h: number }) {
  return (
    <g>
      <rect width="565" height={h} fill="#23262a" /><rect x="565" width="4000" height={h} fill="#323236" />
      {Array.from({ length: 48 }, (_, i) => <path key={i} d={`M${sx(i) + 0.5} 0v${h}`} stroke="#33373a" />)}
      {Array.from({ length: 61 }, (_, b) => <path key={b} d={`M${sx(b * 4) + 0.5} 0v${h}`} stroke={b % 4 ? "#505355" : "#77797b"} />)}
    </g>
  );
}

function Diamond({ x, y }: { x: number; y: number }) {
  return <path d={`M${x} ${y - 9.5}l9.500 9.500-9.500 9.500-9.500-9.500z`} fill="#e8201d" stroke="#180505" strokeWidth="1.500" />;
}

function DrumEditor() {
  return (
    <div className="flex min-w-0 flex-1">
      <div className="relative min-w-0 flex-1 overflow-hidden">
        <div className="relative h-[25px] overflow-hidden bg-[#1b1c1f]">
          <svg className="absolute left-0 top-0 h-full w-full" aria-hidden="true">
            {Array.from({ length: 61 }, (_, b) => <path key={b} d={`M${sx(b * 4) + 0.5} 0v${b % 4 || b === 12 ? 9 : 25}`} stroke={b % 4 ? "#a0a2a4" : "#fff"} />)}
          </svg>
          <span className="absolute left-[468px] top-[9px] h-4 w-[97px] whitespace-nowrap border border-[#55585a] bg-[#27292c] pl-1 font-['Liberation_Sans'] text-[11px] font-bold leading-[15px] text-[#c3c5c6]">HALion Sonic 01</span>
          {Array.from({ length: 8 }, (_, i) => <span key={i} className="absolute top-[10px] text-[12px] font-bold leading-[13px] text-[#f0f0f0]" style={{ left: sx(i * 16) + 5 }}>{6 + i}</span>)}
        </div>
        <svg className="block h-[200px] w-full" role="img" aria-label="ドラムノート">
          <GridLines h={200} />
          <rect y="125" width="565" height="29" fill="#4d4f50" />
          {Array.from({ length: 48 }, (_, i) => <path key={i} d={`M${sx(i) + 0.5} 125v29`} stroke="#3a3c3d" />)}
          <rect y="155" width="565" height="29" fill="#23262a" />
          {[0, 1, 2, 3, 4, 5, 6].map((r) => <path key={r} d={`M0 ${4.5 + r * 30}h4000`} stroke="#55585a" />)}
          {HI.map((n) => <Diamond key={n} x={sx(n) + 0.5} y={139.5} />)}
          {MID.map((n) => <Diamond key={n} x={sx(n) + 0.5} y={169.5} />)}
        </svg>
        <div className="flex h-[3px] items-center"><div className="h-[2px] w-[12px] bg-[#77797b]" /><div className="h-[2px] flex-1 bg-[#77797b]" /><Grip /><div className="h-[2px] flex-1 bg-[#77797b]" /></div>
        <svg className="block h-[57px] w-full" role="img" aria-label="ベロシティーレーン">
          <GridLines h={57} />
          {[...HI, ...MID].map((n) => <rect key={n} x={sx(n) + 0.5} y="2.500" width="5" height="60" fill="#cf2c29" stroke="#180505" />)}
        </svg>
        <div aria-hidden="true" className="absolute left-[574px] top-0 h-[285px] w-px bg-white" />
      </div>
      <div className="flex w-3 shrink-0 flex-col text-white">
        <button type="button" aria-label="ルーラー設定" className="flex h-[22px] items-center justify-center rounded-sm border border-[#5b5d5f] bg-[#434548]"><Icon n="tri" c="size-[9px]" /></button>
        <div className="mt-[3px] flex h-[119px] flex-col items-center bg-[#434548] py-[3px]"><Icon n="up" c="size-2" /><div className="mt-4 h-7 w-2 rounded-sm bg-[#f1f1f1]" /><div className="flex-1" /><Icon n="down" c="size-2" /></div>
        <div className="mt-[3px]"><VZoom label="鍵盤ズーム" v={72} h="h-[78px]" /></div>
        <div className="mt-[3px] flex h-[57px] flex-col items-center justify-between bg-[#434548] py-1 text-[#77797b]"><Icon n="up" c="size-2" /><Icon n="down" c="size-2" /></div>
      </div>
    </div>
  );
}

function LowerZone() {
  return (
    <section className="mt-[4px] rounded-[7px] border-2 border-white bg-[#24272a] px-[7px] py-[7px]">
      <EditorToolbar />
      <p className="mt-[7px] flex h-10 items-center justify-center bg-[#17191b] text-[10px] leading-none text-[#b9babb]">選択オブジェクトなし</p>
      <div className="flex">
        <div className="w-[204px] shrink-0">
          <DrumList />
          <div className="flex h-[60px] overflow-hidden text-[#d4d5d5]">
            <div className="w-[107px] border-r border-t border-[#6b6d6f] pl-[2px]">
              <label htmlFor="map" className="block pl-[6px] pt-[4px] text-[10px] leading-[14px]">マップ</label>
              <div className="mt-[3px] flex h-[19px] w-[99px] rounded-sm border border-[#55585a] bg-[#191a1c]"><div className="relative flex flex-1 items-center"><select id="map" className="h-full w-full appearance-none bg-transparent pl-1 text-[10px] leading-none outline-none"><option>HALion Sonic [.</option></select><Icon n="tri" c="pointer-events-none absolute right-[3px] size-[9px]" /></div></div>
              <p className="pl-[6px] pt-[7px] text-[11px] leading-[14px]">名前</p>
            </div>
            <div className="w-[29px]" />
            <div className="h-[30px] w-[68px] border border-[#6b6d6f] pl-[3px] pt-[3px] text-[8px] leading-[11px]">ベロシティー</div>
          </div>
        </div>
        <div className="flex h-[225px] w-[2px] pt-[25px]"><Splitter /></div>
        <DrumEditor />
      </div>
      <div className="flex h-3 text-white">
        <div className="flex w-[130px] items-center bg-[#3a3c3f] px-1"><Icon n="left" c="size-[9px]" /><div className="ml-[5px] h-2 w-9 rounded-sm bg-[#f1f1f1]" /><div className="flex-1" /><Icon n="right" c="size-[9px]" /></div>
        <div className="ml-1 flex w-[68px] bg-[#434548]"><button type="button" aria-label="レーンを追加" className="flex flex-1 items-center justify-center border-r border-[#24272a]"><Icon n="plus" c="size-[9px]" /></button><button type="button" aria-label="レーン設定" className="flex flex-1 items-center justify-center"><Icon n="tri" c="size-[10px]" /></button></div>
        <div className="ml-[4px] flex flex-1 items-center bg-[#434548] px-1"><Icon n="left" c="size-[9px]" /><div className="ml-[22px] h-2 w-7 rounded-sm bg-[#f1f1f1]" /><div className="flex-1" /><Icon n="right" c="size-[9px]" /></div>
        <div className="ml-[3px] mr-[13px]"><HZoom label="エディター横ズーム" v={54} /></div>
      </div>
    </section>
  );
}

function ZoneTabs() {
  const tab = "whitespace-nowrap text-left leading-none";
  return (
    <nav className="flex h-6 items-start text-[12px] font-bold text-[#dcdddd]">
      <button type="button" aria-label="下ゾーンを閉じる" className="mt-[6px] flex w-[40px] pl-[4px]"><Icon n="x" c="size-[11px]" /></button>
      <button type="button" className={"mt-[5px] w-[86px] text-[12px] " + tab}>MixConsole</button>
      <button type="button" className="relative -mt-[2px] flex h-[22px] w-[106px] items-center rounded-b-sm border-x-2 border-b-2 border-white bg-[#24272a] pl-[19px] pt-[3px] text-[10px] font-bold leading-none text-white">エディター<svg viewBox="0 0 10 6" aria-hidden="true" className="absolute right-[4px] h-[6px] w-[10px]" fill="#c3c5c6"><path d="M0 0h10L5 6z" /></svg></button>
      <button type="button" className={"ml-[19px] mt-[5px] w-[125px] " + tab}>Drum Machine</button>
      <button type="button" className={"mt-[6px] w-[138px] text-[10px] " + tab}>サンプラーコントロール</button>
      <button type="button" className={"mt-[6px] w-[93px] text-[10px] " + tab}>コードパッド</button>
      <button type="button" className={"mt-[5px] " + tab}>MIDI Remote</button>
    </nav>
  );
}

const TILES: [string, React.ReactNode][] = [
  ["VST インスト...ント", <Piano c="w-[44px]" />],
  ["VST エフェクト", <span className="font-['Liberation_Sans'] text-[36px] font-bold leading-none">FX</span>],
  ["ループ & サンプル", <svg viewBox="0 0 48 44" className="h-[44px] w-[48px]"><path d="M10 5.500h17a15.500 15.500 0 11-16 18" fill="none" stroke="currentColor" strokeWidth="6" /><path fill="currentColor" d="M0 24L9 13l9 11zM7 2.500h6v6z" /></svg>],
  ["プリセット", <svg viewBox="0 0 52 44" className="h-[44px] w-[52px]" fill="currentColor" stroke="currentColor" strokeWidth="2" strokeLinejoin="round"><path d="M9 3h13l7 12-7 10H9L2 15zM33 22h10l6 8-6 8H33l-6-8z" /></svg>],
  ["ユーザープリセット", <svg viewBox="0 0 44 46" className="h-[46px] w-[44px]" fill="currentColor"><path d="M8 2h15l6 9q-8 1-8 9 0 5 3 8l-2 3H8L0 17z" /><circle cx="31" cy="21" r="7" /><path d="M20 42q0-12 11-12t11 12q0 2-11 2t-11-2z" /></svg>],
  ["ファイルブラウザー", <svg viewBox="0 0 52 40" className="h-[40px] w-[52px]"><rect y="3" width="52" height="19" rx="2" fill="currentColor" /><circle cx="38" cy="12" r="2.500" fill="#a5a7a9" /><circle cx="46" cy="12" r="2.500" fill="#a5a7a9" /><circle cx="19" cy="23" r="11.500" fill="#a5a7a9" /><circle cx="19" cy="23" r="7.500" fill="none" stroke="currentColor" strokeWidth="3.500" /><path d="M24 29l9 8" stroke="currentColor" strokeWidth="4" /></svg>],
  ["お気に入り", <svg viewBox="0 0 48 46" className="h-[46px] w-[48px]" fill="currentColor" stroke="currentColor" strokeWidth="2" strokeLinejoin="round"><path d="M24 2l5.500 15.500H46L33 27.500 38 44 24 34.500 10 44l5-16.500L2 17.500h16.500z" /></svg>],
];

function MediaZone() {
  return (
    <aside className="ml-1 mr-1 flex w-[230px] shrink-0 flex-col">
      <div className="flex h-[23px] text-[12px] font-bold leading-none text-[#dcdddd]">
        <button type="button" className="w-[69px]">VSTi</button>
        <button type="button" className="relative h-[25px] w-[82px] rounded-t-sm border-x-2 border-t-2 border-[#5f6163] bg-[#24272a] pb-[3px] text-[10px]">メディア</button>
      </div>
      <div className="flex-1 rounded-[7px] border-2 border-[#5f6163] bg-[#24272a] px-[7px] pt-[6px]">
        <div className="flex gap-[3px]">
          <label className="flex h-5 flex-1 items-center rounded-[3px] border border-[#5f6163] bg-[#191a1c] pl-[3px] text-[#c3c5c6]"><Icon n="search" c="size-3" /><input type="search" placeholder="検索" aria-label="メディアを検索" className="ml-[5px] w-full bg-transparent text-[11px] italic leading-none outline-none placeholder:text-[#9a9c9e]" /></label>
          <button type="button" aria-label="結果表示" className="flex h-5 w-[25px] items-center justify-center rounded-[3px] border border-[#6b6d6f] bg-[#434548] text-[#e2e3e3]"><Icon n="blist" c="size-[14px]" /></button>
        </div>
        <div className="mt-[6px] flex h-[20px] gap-[6px]">
          <button type="button" aria-label="戻る" className="flex w-5 items-center justify-center rounded-sm border border-[#34373a] text-[#6b6d6f]"><Icon n="back" c="size-3" /></button>
          <button type="button" aria-label="ホーム" className="text-[#d4d5d5]"><Icon n="home" c="size-[14px]" /></button>
        </div>
        <div className="mt-[4px] h-px bg-[#6f8083]" />
        <div className="mt-[37px] grid grid-cols-2 gap-y-[28px]">
          {TILES.map(([t, art], i) => (
            <button type="button" key={i} className={"flex flex-col items-center whitespace-nowrap text-[11px] leading-[14px] text-[#e2e3e3] " + (i % 2 ? "pr-[2px]" : "pr-[6px]")}>
              <span className="flex size-[70px] items-center justify-center rounded-[3px] bg-[#a5a7a9] text-[#24272a]">{art}</span>
              <span className="mt-3">{t}</span>
            </button>
          ))}
        </div>
      </div>
    </aside>
  );
}

function TransportBar() {
  const tb = "flex w-[38px] items-center justify-center text-[#e2e3e3]";
  return (
    <footer className="flex h-10 items-center bg-[#24272a] pb-px pl-1 pr-1 text-[#d4d5d5]">
      <Group w="w-[25px]"><Cell label="オーディオパフォーマンス" icon="clock" ic="size-[17px]" /></Group>
      <div className="w-[5px]" />
      <Group w="w-[44px]"><Cell label="録音モード" icon="dot" tone="dark" ic="size-[14px]" /><Cell label="録音モード設定" icon="tri" tone="dark" ic="size-3" w="w-[18px]" /></Group>
      <div className="mx-[2px]"><Dots /></div><div className="w-[4px]" />
      <Group w="w-[44px]"><Cell label="オーディオ録音モード" icon="wave" tone="dark" ic="size-[18px]" /><Cell label="オーディオ録音設定" icon="tri" tone="dark" ic="size-3" w="w-[18px]" /></Group>
      <div className="mx-[2px]"><Dots /></div><div className="w-[4px]" />
      <Group w="w-[213px]"><span className="flex items-center pl-1"><Icon n="midi" /></span><Drop label="MIDI録音モード" value="新規パート" w="w-[92px]" pad="pl-1" size="text-[11px]" /><div className="w-px bg-[#55585a]" /><Drop label="MIDIサイクル録音" value="ミックス" pad="pl-[6px]" size="text-[11px]" /></Group>
      <div className="mx-[2px]"><Dots /></div><div className="w-[4px]" />
      <button type="button" className="h-[25px] w-[38px] rounded-[3px] bg-[#f29a38] text-[13px] leading-none text-[#3d2a12]">AQ</button>
      <div className="flex-1" />
      <div className="ml-[10px]" />
      <Group w="w-[150px]"><Cell label="左ロケーターへ" icon="locl" ic="size-[14px]" /><span className="flex flex-1 items-center justify-end pr-1 text-[14px] leading-none"><Pos v={["4", "4", "4", "0"]} cell="w-[21px]" last="w-[17px]" /></span></Group>
      <div className="w-[10px]" />
      <Group w="w-[150px]"><Cell label="右ロケーターへ" icon="locr" ic="size-[14px]" /><span className="flex flex-1 items-center justify-end pr-1 text-[14px] leading-none"><Pos v={["4", "4", "4", "0"]} cell="w-[21px]" last="w-[17px]" /></span></Group>
      <div className="w-[5px]" />
      <Group w="w-[75px]"><Cell label="パンチをロック" icon="lock" tone="on" ic="size-[14px]" /><Cell label="パンチイン" icon="punchin" ic="size-[14px]" /><Cell label="パンチアウト" icon="punchout" ic="size-[14px]" /></Group>
      <div className="mx-[3px]"><Dots /></div><div className="w-[3px]" />
      <div className="flex h-8 w-[275px] shrink-0 rounded-[3px] border-2 border-[#b9babb] bg-[#616365]">
        <button type="button" aria-label="前のマーカー" className={tb}><Icon n="prev" c="size-[15px]" /></button>
        <button type="button" aria-label="次のマーカー" className={tb}><Icon n="next" c="size-[15px]" /></button>
        <button type="button" aria-label="サイクル" className={tb + " flex-1"}><Icon n="cycle" /></button>
        <button type="button" aria-label="停止" className="flex w-[49px] items-center justify-center bg-[#a1a4a5] text-[#1f2123]"><Icon n="stop" c="size-[15px]" /></button>
        <button type="button" aria-label="再生" className="flex w-[50px] items-center justify-center text-[#e2e3e3]"><Icon n="play" /></button>
        <button type="button" aria-label="録音" className="flex w-[46px] items-center justify-center text-[#e2e3e3]"><Icon n="rec" /></button>
      </div>
      <div className="mx-[3px]"><Dots /></div><div className="w-[3px]" />
      <Group w="w-[37px]"><Cell label="レトロスペクティブ" icon="moon" w="flex-1" ic="size-[15px]" /></Group>
      <div className="w-[6px]" />
      <Group w="w-[150px]"><Cell label="時間表示形式" icon="note" tone="dark" w="w-[25px] border-r border-[#55585a]" ic="size-[14px]" /><span className="flex flex-1 items-center justify-end pr-1 text-[14px] leading-none"><Pos v={["9", "1", "1", "97"]} cell="w-[21px]" last="w-[17px]" /></span></Group>
      <div className="mx-[3px]"><Dots /></div><div className="w-[2px]" />
      <Group w="w-[232px]">
        <Cell label="テンポトラック" icon="tempo" tone="on" />
        <label className="flex w-[82px] items-center justify-between border-r border-[#55585a] pl-[11px] pr-[7px]"><input aria-label="テンポ" defaultValue="170.000" className="w-[50px] bg-transparent text-[12px] leading-none outline-none" /><Spin /></label>
        <span className="flex w-[49px] items-center justify-center text-[12px] leading-none">4/4</span>
        <button type="button" className="w-[50px] bg-[#434548] text-[12px] leading-none">Tap</button>
        <Cell label="テンポ設定" icon="tri" tone="dark" ic="size-3" />
      </Group>
      <div className="mx-[3px]"><Dots /></div>
      <div className="flex-1" />
      <Group w="w-[44px]"><Cell label="メトロノーム" icon="metro" /><Cell label="メトロノーム設定" icon="gear" w="w-[20px]" ic="size-[13px]" /></Group>
      <div className="mx-[3px]"><Dots /></div><div className="w-[2px]" />
      <Group w="w-[89px]"><div className="w-[26px] border-r border-[#45484a]" /><div className="flex flex-1 items-end justify-end gap-[2px] pb-px pr-3"><i className="h-px w-[7px] bg-[#51b4d0]" /><i className="h-px w-[7px] bg-[#51b4d0]" /></div></Group>
      <div className="ml-[2px]"><Dots /></div>
    </footer>
  );
}

export default function App() {
  return (
    <div className="flex min-h-screen flex-col bg-[#24272a] font-['Noto_Sans','Noto_Sans_CJK_JP',sans-serif] [font-feature-settings:'palt']">
      <TitleBar />
      <Toolbar />
      <StatusLine />
      <InfoLine />
      <div className="flex h-[28px] bg-[#24272a]"><div className="w-[447px] bg-[#515254] pl-px"><div className="h-full w-9 border border-[#c9cacb] bg-[#a3a4a6]" /></div></div>
      <main className="flex flex-1 flex-col bg-[#070808] pt-[5px]">
        <div className="flex flex-1">
          <div className="flex pb-[4px]"><ChannelStrip /></div>
          <div className="ml-1 flex min-w-0 flex-1 flex-col">
            <section className="flex flex-1 rounded-[7px] border-2 border-[#5f6163] bg-[#24272a] p-1"><TrackList /><Splitter /><Arrange /></section>
            <LowerZone />
            <ZoneTabs />
          </div>
          <div className="flex pb-[4px]"><MediaZone /></div>
        </div>
      </main>
      <TransportBar />
    </div>
  );
}
